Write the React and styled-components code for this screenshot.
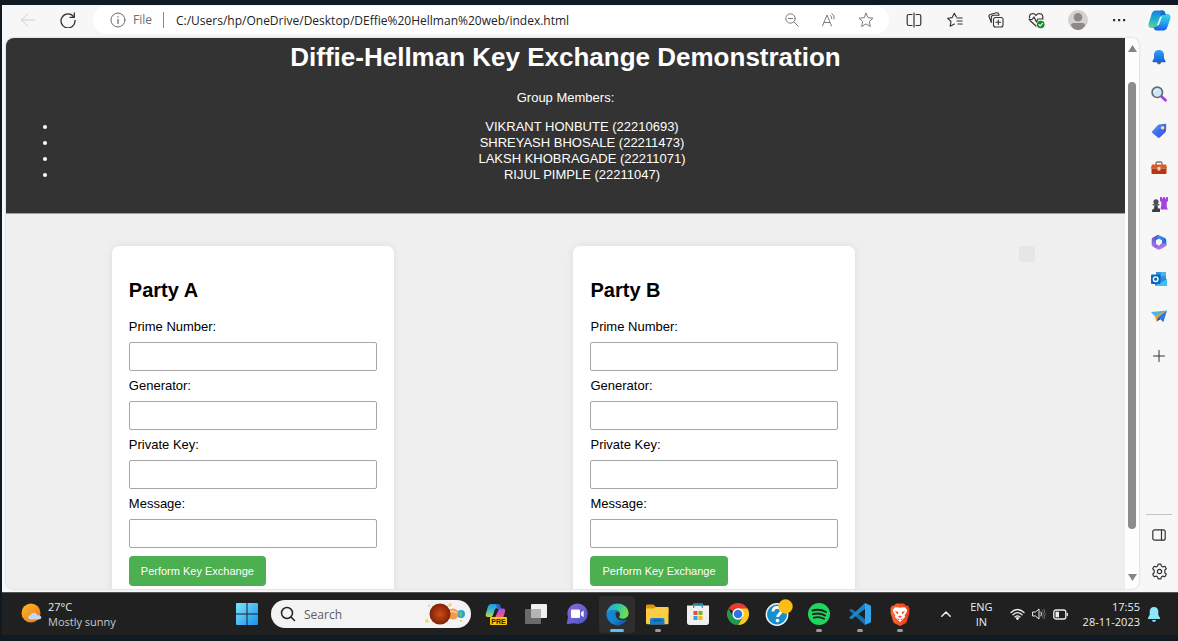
import React from "react";
import styled, { createGlobalStyle } from "styled-components";

const ui = `"Open Sans", "Noto Sans", sans-serif`;
const web = `"Liberation Sans", Arial, sans-serif`;

const GlobalStyle = createGlobalStyle`
  *, *::before, *::after { box-sizing: border-box; }
  body { margin: 0; background: #101a23; }
  button, input { font: inherit; margin: 0; }
  svg { flex: none; }
`;

const Desktop = styled.div`
  display: flex;
  flex-direction: column;
  height: 100vh;
  padding: 5px 0 6px 2px;
  background: #101a23;
  font-family: ${ui};
`;

const Window = styled.div`
  flex: 1;
  min-height: 0;
  display: flex;
  background: #f7f7f7;
`;

const WindowMain = styled.div`
  flex: 1;
  min-width: 0;
  display: flex;
  flex-direction: column;
`;

/* Browser toolbar */
const Toolbar = styled.div`
  display: flex;
  align-items: center;
  flex: none;
  height: 33px;
  padding: 0 0 3px 6px;
`;

const ToolButton = styled.button`
  flex: none;
  display: flex;
  align-items: center;
  justify-content: center;
  width: ${(p) => p.$w || 41}px;
  height: 28px;
  padding: 0;
  border: 0;
  background: none;
  color: ${(p) => p.$color || "#333"};
`;

const AddressBar = styled.div`
  flex: 1;
  min-width: 0;
  display: flex;
  align-items: center;
  height: 28px;
  margin: 0 4px 0 5px;
  padding: 0 5px 0 17px;
  border-radius: 14px;
  background: #fff;
  color: #6d6d6d;
  font-size: 12px;
`;

const Scheme = styled.span`
  margin-left: 7px;
  padding-right: 11px;
  line-height: 16px;
  border-right: 1px solid #8a8a8a;
`;

const UrlInput = styled.input`
  flex: 1;
  min-width: 0;
  height: 24px;
  padding: 0 0 0 12px;
  border: 0;
  outline: 0;
  background: none;
  color: #222;
`;

/* Page viewport */
const Viewport = styled.div`
  flex: 1;
  min-height: 0;
  display: flex;
  margin: 0 0 3px 4px;
  border-radius: 8px;
  overflow: hidden;
  box-shadow: 0 0 2px #b5b5b5;
  background: #fdfdfd;
`;

const Page = styled.div`
  flex: 1;
  min-width: 0;
  overflow: hidden;
  background: #efefef;
  color: #000;
  font-family: ${web};
  font-size: 13px;
  line-height: 16px;
`;

const PageHeader = styled.header`
  padding: 4px 13px 30px;
  border-bottom: 1px solid #a39d9f;
  background: #333;
  color: #fff;
  text-align: center;
`;

const Title = styled.h1`
  margin: 0 0 18px;
  font-size: 26px;
  line-height: 30px;
`;

const Intro = styled.p`
  margin: 0 0 13px;
`;

const Members = styled.ul`
  margin: 0;
  padding: 0 6px 0 39px;
`;

const Parties = styled.main`
  display: flex;
  justify-content: space-around;
  align-items: flex-start;
  padding: 16px;
`;

const Card = styled.form`
  width: 282px;
  margin: 16px;
  padding: 17px;
  border-radius: 7px;
  background: #fff;
  box-shadow: 0 0 8px rgba(0, 0, 0, 0.08);
`;

const CardTitle = styled.h2`
  margin: 16px 0 18px;
  font-size: 20px;
  line-height: 22px;
`;

const Label = styled.label`
  display: block;
  margin-bottom: 7px;
`;

const Field = styled.input`
  display: block;
  width: 100%;
  height: 29px;
  margin-bottom: 7px;
  padding: 6px;
  border: 1px solid #a6a6a6;
  border-radius: 2px;
  background: #fff;
`;

const ExchangeButton = styled.button`
  height: 30px;
  margin-top: 1px;
  padding: 0 12px;
  border: 0;
  border-radius: 4px;
  background: #4caf50;
  color: #fff;
  font-size: 11px;
`;

const Result = styled.div`
  width: 16px;
  height: 16px;
  margin: 16px 0;
  border-radius: 3px;
  background: #e6e6e6;
`;

const Scrollbar = styled.div`
  flex: none;
  display: flex;
  flex-direction: column;
  align-items: center;
  width: 14px;
  padding: 7px 0 8px;
  background: #fdfdfd;
`;

const Track = styled.div`
  flex: 1;
  display: flex;
  padding: 30px 0 45px;
`;

const Thumb = styled.div`
  width: 8px;
  border-radius: 4px;
  background: #8c8c8c;
`;

/* Edge sidebar */
const Sidebar = styled.aside`
  flex: none;
  display: flex;
  flex-direction: column;
  width: 39px;
  padding: 0 0 2px 1px;
`;

const SideButton = styled.button`
  display: flex;
  align-items: center;
  justify-content: center;
  height: 37px;
  padding: 0;
  border: 0;
  background: none;
  color: #333;
`;

const CopilotButton = styled(SideButton)`
  height: 30px;
  margin-bottom: 3px;
`;

const AddButton = styled(SideButton)`
  margin-top: 3px;
`;

const SideRule = styled.hr`
  width: 26px;
  margin: auto auto 1px;
  border: 0;
  border-top: 1px solid #c4c4c4;
`;

/* Taskbar */
const Taskbar = styled.footer`
  flex: none;
  display: flex;
  align-items: center;
  height: 43px;
  padding: 0 18px 0 0;
  border-top: 1px solid #555;
  background: #202020;
  color: #ededed;
  font-size: 11px;
  line-height: 15px;
`;

const Weather = styled.div`
  flex: none;
  display: flex;
  align-items: center;
  gap: 5px;
  width: 225px;
  padding-left: 19px;
`;

const Condition = styled.div`
  color: #c9c9c9;
`;

const TaskButton = styled.button`
  position: relative;
  flex: none;
  display: flex;
  align-items: center;
  justify-content: center;
  width: ${(p) => (p.$active ? 36 : 40)}px;
  height: 37px;
  margin: ${(p) => (p.$active ? "0 2px" : "0")};
  padding: 0;
  border: 0;
  border-radius: 4px;
  background: ${(p) => (p.$active ? "#2e2e2e" : "none")};

  &::after {
    content: "";
    display: ${(p) => (p.$active || p.$open ? "block" : "none")};
    position: absolute;
    bottom: 1px;
    width: ${(p) => (p.$active ? 14 : 6)}px;
    height: 3px;
    border-radius: 2px;
    background: ${(p) => (p.$active ? "#5ac0f5" : "#9b9b9b")};
  }
`;

const SearchBox = styled.label`
  flex: none;
  display: flex;
  align-items: center;
  gap: 8px;
  width: 200px;
  height: 28px;
  margin: 0 5px 0 4px;
  padding: 0 3px 0 9px;
  border-radius: 14px;
  background: #f3f3f3;
  color: #222;
  font-size: 12px;
`;

const SearchInput = styled.input`
  flex: 1;
  min-width: 0;
  padding: 0;
  border: 0;
  outline: 0;
  background: none;
  &::placeholder { color: #5d5d5d; opacity: 1; }
`;

const Apps = styled.div`
  display: flex;
  justify-content: space-between;
  width: 444px;
`;

const Tray = styled.div`
  display: flex;
  align-items: center;
  margin-left: auto;
`;

const Language = styled.div`
  margin: 0 17px 0 19px;
  text-align: center;
`;

const Status = styled.div`
  display: flex;
  align-items: center;
  gap: 7px;
  margin-right: 15px;
`;

const Clock = styled.div`
  margin-right: 8px;
  text-align: right;
`;

const Svg = ({ w = 16, h, box, children, sw = 1 }) => (
  <svg
    width={w}
    height={h || w}
    viewBox={box || `0 0 ${w} ${h || w}`}
    fill="none"
    stroke="currentColor"
    strokeWidth={sw}
    strokeLinecap="round"
    strokeLinejoin="round"
    aria-hidden="true"
  >
    {children}
  </svg>
);

const Fill = ({ w = 16, h, box, children }) => (
  <svg width={w} height={h || w} viewBox={box || `0 0 ${w} ${h || w}`} aria-hidden="true">
    {children}
  </svg>
);

const Grad = ({ id, stops, x2 = 1, y2 = 1 }) => (
  <linearGradient id={id} x1="0" y1="0" x2={x2} y2={y2}>
    {stops.map((c, i) => (
      <stop key={i} offset={i / (stops.length - 1)} stopColor={c} />
    ))}
  </linearGradient>
);

const star = "M8 1.2 L10 5.7 L15 6.2 L11.3 9.5 L12.4 14.5 L8 11.9 L3.6 14.5 L4.7 9.5 L1 6.2 L6 5.7 Z";

const Copilot = () => (
  <Fill w={23} h={21} box="0 0 23 21">
    <defs>
      <Grad id="cpA" stops={["#1b7be2", "#17b3cf", "#62d487"]} x2={0} />
      <Grad id="cpB" stops={["#3fd6d8", "#27a8f5", "#1459e8"]} x2={0} />
    </defs>
    <path d="M7.500.5h7c1.600 0 2.300 1 2.700 2.500l.6 2h-2.300c-1.800 0-2.700 1.200-3.300 3L10 15c-.7 2-1.700 3-3.700 3H3.500C.8 18 0 15.500.8 13L3.600 4C4.400 1.800 5.600.5 7.500.5z" fill="url(#cpA)" />
    <path d="M15.500 20.500h-7c-1.600 0-2.300-1-2.700-2.500l-.2-1h1c1.800 0 2.700-1.200 3.300-3L12.600 7c.6-2 1.600-3 3.600-3h3.300c2.700 0 3.500 2.500 2.700 5l-2.800 8c-.8 2.200-2 3.500-3.900 3.500z" fill="url(#cpB)" />
    <path d="M11.400 8.500c.4-1.200 1.200-2 2.600-2.200l-2.500 7.200c-.4 1.200-1.200 2-2.600 2.200z" fill="#eefaff" />
    <path d="M12.500.5h2c1.600 0 2.300 1 2.700 2.500l.6 2h-2.300c-1.300 0-2.200.6-2.800 1.700z" fill="#1a6bd2" />
  </Fill>
);

const SideBell = () => (
  <Fill w={16}>
    <defs><Grad id="sbell" stops={["#2fa3f3", "#1461d8"]} x2={0} /></defs>
    <path d="M6 13h4c0 1.500-.8 2.300-2 2.300S6 14.500 6 13z" fill="#5b5f66" />
    <path d="M8 1C4.800 1 3 3.300 3 6v3.300L1.500 12c-.3.800 0 1.200.8 1.200h11.400c.8 0 1.100-.4.800-1.200L13 9.300V6c0-2.700-1.800-5-5-5z" fill="url(#sbell)" />
  </Fill>
);

const SideSearch = () => (
  <Fill w={16}>
    <path d="M10.500 10.500l4 3.700" stroke="#a63ce8" strokeWidth="2.800" strokeLinecap="round" />
    <circle cx="6.300" cy="6.300" r="5.200" fill="#c9e8f8" stroke="#666c72" strokeWidth="1.700" />
    <path d="M3.500 6A2.600 2.600 0 016 3.500" stroke="#fff" fill="none" />
  </Fill>
);

const Tag = () => (
  <Fill w={16}>
    <defs><Grad id="tag" stops={["#5fa3ff", "#3b6df0", "#5a42dd"]} /></defs>
    <path d="M8 1.500l6-.7c.9-.1 1.300.3 1.300 1.200L15 8c-.1.500-.3.900-.7 1.300l-5.500 5.300c-.6.600-1.300.6-1.900 0L1.400 10c-.6-.6-.6-1.400 0-2L7 2c.3-.3.600-.4 1-.5z" fill="url(#tag)" />
    <circle cx="11.600" cy="4.700" r="1.800" fill="#ffe36a" />
  </Fill>
);

const Toolbox = () => (
  <Fill w={18} h={16}>
    <path d="M6 5V3.300C6 2.500 6.500 2 7.200 2h3.600c.7 0 1.200.5 1.200 1.300V5" fill="none" stroke="#777" strokeWidth="1.300" />
    <path d="M2 4.500h14l1.300 4H.7z" fill="#e0582a" />
    <path d="M1.500 8.500h15V13c0 .6-.4 1-1 1h-13c-.6 0-1-.4-1-1z" fill="#b9340f" />
    <rect x="7.500" y="7" width="3" height="3.500" rx=".5" fill="#d8dadd" />
  </Fill>
);

const Chess = () => (
  <Fill w={18}>
    <path d="M10 1h2v1.500h1.200V1h1.800v1.500h1.200V1H18v4l-1.300 1v5l1.300 2.500h-7.500L11.300 9V6L10 5z" fill="#a93fe3" />
    <circle cx="6" cy="5.800" r="2.600" fill="#4b4e52" />
    <path d="M4.700 8h2.600l.7 4.500h2V16H2v-2l2-1.500z" fill="#3c3f43" />
    <rect x="2.500" y="8" width="7" height="1.500" rx=".7" fill="#5b5e63" />
  </Fill>
);

const M365 = () => (
  <Fill w={16}>
    <defs>
      <Grad id="m1" stops={["#5548c8", "#a77be8"]} x2={0} />
      <Grad id="m2" stops={["#36a8ee", "#2456c8"]} />
      <Grad id="m3" stops={["#7353d5", "#d08af0"]} />
    </defs>
    <path d="M7 .7L2 3.500C1 4 .7 4.700.7 5.700v4.800c0 1 .4 1.700 1.300 2.200L5 10.500V6.200L10 3.500z" fill="url(#m1)" />
    <path d="M7 .7l6.500 3c1.200.6 1.800 1.300 1.800 2.600V12L11 9.500V6.300L6.500 4z" fill="url(#m2)" />
    <path d="M15.300 9.500v1c0 1-.4 1.700-1.300 2.200l-4.500 2.600c-1 .5-2 .5-3 0L2 12.700 5 10l3 1.700L11 9z" fill="url(#m3)" />
  </Fill>
);

const Outlook = () => (
  <Fill w={16}>
    <path d="M5 1h10v7H5z" fill="#2f94e0" />
    <path d="M10 1h5v4h-5z" fill="#43b5ef" />
    <path d="M4 7l12 1v6c0 .6-.4 1-1 1H5c-.6 0-1-.4-1-1z" fill="#1d8adb" />
    <path d="M4 14.500L16 8v6c0 .6-.4 1-1 1H5z" fill="#3fc0f5" />
    <rect x="0" y="3.500" width="9.500" height="9.500" rx="1" fill="#0e64b8" />
    <circle cx="4.700" cy="8.200" r="2.300" fill="none" stroke="#fff" strokeWidth="1.400" />
  </Fill>
);

const Plane = () => (
  <Fill w={16}>
    <path d="M0 4l16-1.500L8 8 4 8.500z" fill="#45b8e8" />
    <path d="M16 2.500L4 8l1.500 5.500L8.500 11z" fill="#e5a135" />
    <path d="M16 2.500L7.500 9l4 4.500c.5.500 1 .3 1.200-.3z" fill="#2f78d8" />
    <path d="M5.500 13.500l2-4.500 2 2.200z" fill="#1b4fa5" />
  </Fill>
);

const Gear = () => (
  <Svg w={17} box="0 0 16 16" sw={1.1}>
    <path d="M6.700 1h2.600l.5 1.900 1.400.8 1.900-.6 1.300 2.300-1.400 1.400v2.400l1.400 1.400-1.300 2.300-1.900-.6-1.400.8L9.300 15H6.700l-.5-1.900-1.400-.8-1.900.6-1.300-2.300L3 9.200V6.800L1.600 5.400l1.300-2.300 1.900.6 1.400-.8z" />
    <circle cx="8" cy="8" r="2" />
  </Svg>
);

const WeatherIcon = () => (
  <Fill w={22}>
    <defs><Grad id="sun" stops={["#f9bd25", "#ee6f1d"]} /></defs>
    <circle cx="10" cy="10" r="9.500" fill="url(#sun)" />
    <path d="M10 16.500c-2 0-3-1-3-2.200 0-1.400 1.200-2.200 2.500-2.100.5-1.800 2-2.700 3.800-2.500 1.600.2 2.700 1.300 3 2.600 2-.1 4 .5 4 2.200 0 1.300-1.200 2-2.800 2z" fill="#c2d7f7" />
  </Fill>
);

const StartIcon = () => (
  <Fill w={22}>
    <defs><Grad id="win" stops={["#7de3fb", "#1692ee"]} /></defs>
    <path d="M0 1q0-1 1-1h9.500v10.500H0zM11.500 0H21q1 0 1 1v9.500H11.500zM0 11.500h10.500V22H1q-1 0-1-1zM11.500 11.500H22V21q0 1-1 1h-9.500z" fill="url(#win)" />
  </Fill>
);

const Planets = () => (
  <Fill w={44} h={24}>
    <defs>
      <radialGradient id="mars"><stop offset="0" stopColor="#d04b16" /><stop offset="1" stopColor="#7f2207" /></radialGradient>
    </defs>
    <circle cx="37" cy="12" r="4" fill="#27a3d8" />
    <path d="M35 9q3 0 3 3t-2 3z" fill="#6cc46b" />
    <circle cx="29" cy="12" r="5.500" fill="#f29a54" />
    <path d="M25 10q4-2 8 1" stroke="#ffd19b" strokeWidth="1.500" fill="none" />
    <circle cx="16" cy="12" r="10.500" fill="url(#mars)" />
    <path d="M3 17v4M1 19h4M26 1v4M24 3h4M5 2.500v2M4 3.500h2M37 18v2M36 19h2" stroke="#edc94e" />
  </Fill>
);

const CopilotPre = () => (
  <Fill w={22}>
    <defs>
      <Grad id="pA" stops={["#2196e8", "#3dbbc5", "#cfd33e"]} x2={0} />
      <Grad id="pB" stops={["#9a56ee", "#e34fa4", "#f4794b"]} x2={0} />
    </defs>
    <path d="M6 1h6c1.500 0 2.200 1 2.600 2.500L15 5h-3c-1.500 0-2 1-2.500 2.500L8 12c-.5 1.500-1.300 2-2.500 2H3C.8 14 .3 12.500.9 10.500L3 3.500C3.500 2 4.500 1 6 1z" fill="url(#pA)" />
    <path d="M11 1h2c1.500 0 2.200 1 2.600 2.500L16 6h-4z" fill="#2766c9" />
    <path d="M13 8c.5-1.500 1.200-2.500 2.800-2.500H18c2 0 2.500 1.500 2 3.500l-2 6c-.5 1.500-1.500 2-3 2H9z" fill="url(#pB)" />
    <rect x="5" y="14" width="17" height="8" rx="1" fill="#fbc711" />
    <text x="13.500" y="20.700" fontSize="7" fontWeight="700" fontFamily="Liberation Sans, sans-serif" textAnchor="middle" fill="#2b2200">PRE</text>
  </Fill>
);

const TaskView = () => (
  <Fill w={22}>
    <rect x="6" y="1" width="16" height="14" rx="1" fill="#f0f0f0" />
    <rect x="0" y="6" width="16" height="15" rx="1" fill="#6b6b6b" />
    <path d="M6 6h10v9H6z" fill="#b4b4b4" />
  </Fill>
);

const Chat = () => (
  <Fill w={22}>
    <defs><Grad id="chat" stops={["#8a6ad8", "#4c56c6"]} /></defs>
    <path d="M2 14L.8 20.500c-.1.600.2.900.8.800L9 20z" fill="#6a5fcb" />
    <circle cx="11.500" cy="10.800" r="10.200" fill="url(#chat)" />
    <rect x="5" y="6.500" width="9" height="8.500" rx="1.300" fill="#fff" />
    <path d="M15 9.500l2.700-2v6.700l-2.700-2z" fill="#fff" />
  </Fill>
);

const EdgeLogo = () => (
  <Fill w={23} box="0 0 24 24">
    <defs>
      <Grad id="eg1" stops={["#219fe0", "#2dc4b1", "#6ddd4f"]} y2={0.3} />
      <Grad id="eg2" stops={["#1a9de2", "#0a4f9e"]} />
    </defs>
    <path d="M.5 12A11.600 11.600 0 0112 .4C18.500.4 23.600 5 23.600 10.500c0 3.700-2.700 6-6 6-2.600 0-4-1-4-1.800 0-.6 1-.9 1-2.700 0-2.600-2.300-4.600-5.500-4.600C5 7.400 1.500 9 .5 12z" fill="url(#eg1)" />
    <path d="M.4 12.500C.7 9 4.500 7.400 8.700 7.400c2.500 0 4.200.8 5.100 2.300C10 8.800 8 11.300 8 14c0 4.500 3.700 8 8 8.400A11.700 11.700 0 01.4 12.500z" fill="#1685d3" />
    <path d="M8 14c0-1.800.8-3.300 2.100-4.300C8.500 15.500 14 20 21.700 17.300 20 20.500 16 23.500 12 23.500 7 22 7 17 8 14z" fill="url(#eg2)" />
  </Fill>
);

const Folder = () => (
  <Fill w={23} h={22}>
    <path d="M0 3c0-1 .5-1.500 1.500-1.500h6L10 4H21c1 0 1.500.5 1.500 1.500V11H0z" fill="#dc9310" />
    <path d="M0 5.500h8L10 4h11.500c.8 0 1 .4 1 1V20c0 .8-.3 1.200-1 1.200h-20C.4 21.200 0 20.800 0 20z" fill="#fccd42" />
    <path d="M4 21.500V17c0-1.300.8-2 2-2h10.500c1.200 0 2 .7 2 2v4.500z" fill="#167cd0" />
    <path d="M7.500 17.500h7.500" stroke="#0a579e" strokeWidth="1.500" />
  </Fill>
);

const Store = () => (
  <Fill w={22}>
    <path d="M6.500 5V1.700Q6.500 1 7.200 1h7.600q.7 0 .7.700V5" fill="none" stroke="#2a9bc5" strokeWidth="1.500" />
    <path d="M0 2.500h6v2.500h1.200V2.500h7.600V5H16V2.500h6v17c0 1.500-1 2.500-2.500 2.500h-17C1 22 0 21 0 19.500z" fill="#f0f0f0" />
    <path d="M6.500 8h4v4h-4z" fill="#e8502f" />
    <path d="M11.500 8h4v4h-4z" fill="#78b723" />
    <path d="M6.500 13h4v4h-4z" fill="#29a4e9" />
    <path d="M11.500 13h4v4h-4z" fill="#fbb813" />
  </Fill>
);

const Chrome = () => (
  <Fill w={22} box="0 0 24 24">
    <path d="M12 12L1.600 6A12 12 0 0122.400 6z" fill="#e33b2e" />
    <path d="M12 6h10.400A12 12 0 0112 24l5.200-9z" fill="#fdc921" />
    <path d="M17.200 15L12 24A12 12 0 011.600 6l5.200 9z" fill="#219b4b" />
    <circle cx="12" cy="12" r="6.200" fill="#fff" />
    <circle cx="12" cy="12" r="4.700" fill="#2e75e8" />
  </Fill>
);

const Help = () => (
  <Fill w={28} h={30}>
    <circle cx="12" cy="15.500" r="10.700" fill="#178fcb" stroke="#e8f5fb" strokeWidth="1.400" />
    <path d="M8 12.500c0-2.800 1.700-4.200 4.200-4.200 2.400 0 4 1.400 4 3.600 0 3.100-3.600 3.200-3.600 6" fill="none" stroke="#fff" strokeWidth="2.800" />
    <circle cx="12.500" cy="21.500" r="1.800" fill="#fff" />
    <circle cx="20.500" cy="7.500" r="7.200" fill="#fcbd16" />
  </Fill>
);

const Spotify = () => (
  <Fill w={22}>
    <circle cx="11" cy="11" r="11" fill="#1ed760" />
    <path d="M4.500 7.500Q11.500 5.300 18 9M5 11.200Q11.500 9.400 17 12.500M5.800 14.700Q11.500 13.200 16 15.800" fill="none" stroke="#17231b" strokeWidth="1.900" strokeLinecap="round" />
  </Fill>
);

const VsCode = () => (
  <Fill w={22}>
    <path d="M2.600 5.700L0 7.200 16 22V16z" fill="#1470b0" />
    <path d="M2.600 16.300L0 14.800 16 0v6z" fill="#1c86cc" />
    <path d="M16 0l5 2.300c.7.300 1 .7 1 1.500v14.400c0 .8-.3 1.200-1 1.500L16 22z" fill="#31a5ee" />
  </Fill>
);

const Brave = () => (
  <Fill w={20} h={23}>
    <defs><Grad id="brave" stops={["#fa6a31", "#ef3a20"]} y2={0} /></defs>
    <path d="M6 .5h8l2 2.200 2-.2L19.700 6l-.6 2 .5 1.500-2.800 9c-.3.800-.7 1.300-1.300 1.700L10 23l-5.500-2.800c-.6-.4-1-.9-1.300-1.700l-2.800-9L.9 8 .3 6 2 2.500l2 .2z" fill="url(#brave)" />
    <path d="M10 4.700l2.500-.5 3 .3 1.700 3-1 2.500-1.500 2 .3 2L10 19l-5-5 .3-2-1.500-2-1-2.500 1.700-3 3-.3z" fill="#fff" />
    <path d="M4.800 8l3.700 1-1 2.500zM15.200 8l-3.700 1 1 2.500zM8 13.500l2-1 2 1-2 1.500zM7 14.500l3 2.500 3-2.500-1.500 2.500H8.500z" fill="#f1512a" />
  </Fill>
);

const parties = ["A", "B"];
const fields = ["Prime Number:", "Generator:", "Private Key:", "Message:"];
const members = [
  "VIKRANT HONBUTE (22210693)",
  "SHREYASH BHOSALE (22211473)",
  "LAKSH KHOBRAGADE (22211071)",
  "RIJUL PIMPLE (22211047)",
];

const sideApps = [
  ["Notifications", SideBell],
  ["Search", SideSearch],
  ["Shopping", Tag],
  ["Tools", Toolbox],
  ["Games", Chess],
  ["Microsoft 365", M365],
  ["Outlook", Outlook],
  ["Drop", Plane],
];

const taskApps = [
  ["Copilot", CopilotPre],
  ["Task view", TaskView],
  ["Chat", Chat],
  ["Microsoft Edge", EdgeLogo, "active"],
  ["File Explorer", Folder, "open"],
  ["Microsoft Store", Store],
  ["Google Chrome", Chrome],
  ["Get Help", Help],
  ["Spotify", Spotify, "open"],
  ["Visual Studio Code", VsCode, "open"],
  ["Brave", Brave, "open"],
];

const PartyCard = ({ name }) => (
  <Card onSubmit={(e) => e.preventDefault()}>
    <CardTitle>Party {name}</CardTitle>
    {fields.map((label, i) => (
      <React.Fragment key={label}>
        <Label htmlFor={`party${name}-${i}`}>{label}</Label>
        <Field id={`party${name}-${i}`} type="text" />
      </React.Fragment>
    ))}
    <ExchangeButton type="submit">Perform Key Exchange</ExchangeButton>
  </Card>
);

const BrowserToolbar = () => (
  <Toolbar>
    <ToolButton $w={40} $color="#cfcfcf" aria-label="Back">
      <Svg w={16}><path d="M15 8H1.500M7.500 2L1.500 8l6 6" /></Svg>
    </ToolButton>
    <ToolButton $w={40} aria-label="Refresh">
      <Svg w={16} sw={1.3}><path d="M13.800 5A7 7 0 1015 8.500M14.300 1v4.300H10" /></Svg>
    </ToolButton>
    <AddressBar>
      <Svg w={16}><circle cx="8" cy="8" r="7" /><path d="M8 7.500v4M8 4.700v.2" strokeWidth={1.3} /></Svg>
      <Scheme>File</Scheme>
      <UrlInput
        aria-label="Address"
        defaultValue="C:/Users/hp/OneDrive/Desktop/DEffie%20Hellman%20web/index.html"
      />
      <ToolButton $w={37} $color="#7c7c7c" aria-label="Zoom out">
        <Svg w={14}><circle cx="5.500" cy="5.500" r="4.700" /><path d="M9 9l4.200 4.200M3.300 5.500h4.400" /></Svg>
      </ToolButton>
      <ToolButton $w={37} $color="#7c7c7c" aria-label="Read aloud">
        <Svg w={16}><path d="M1.500 14L6 3l4.500 11M3 10.500h6M9.500 3.500q1.500 1 1.300 3M11 1.500q3 2 2.200 5.500" /></Svg>
      </ToolButton>
      <ToolButton $w={37} $color="#7c7c7c" aria-label="Add to favourites">
        <Svg w={16}><path d={star} /></Svg>
      </ToolButton>
    </AddressBar>
    <ToolButton aria-label="Split screen">
      <Svg w={16} sw={1.2}><path d="M6 2.500H3Q1.200 2.500 1.200 4.300v7.400Q1.200 13.500 3 13.500h3M10 2.500h3q1.800 0 1.800 1.800v7.400q0 1.800-1.800 1.800h-3M8 1v14" /></Svg>
    </ToolButton>
    <ToolButton aria-label="Favourites">
      <Svg w={16} sw={1.1}><path d="M9.300 5L7.300 1.200 5.200 5.600.7 6.300 4 9.500l-.8 4.700 4.100-2.300M10 6h5.200M10 9h5.200M11 12h4.200" /></Svg>
    </ToolButton>
    <ToolButton aria-label="Collections">
      <Svg w={16} sw={1.1}><rect x="5.500" y="5.500" width="9.500" height="9.500" rx="2" /><path d="M10.300 8v4.600M8 10.300h4.600M3.300 10.500L1 4.500Q.7 3 2.200 2.500L8.500.8Q10 .6 10.500 1.800l.5 1.200M3.300 10.500V5.500Q3.300 3.300 5.500 3.300h5.500" /></Svg>
    </ToolButton>
    <ToolButton aria-label="Browser essentials">
      <Svg w={17} box="0 0 17 17" sw={1.2}>
        <path d="M8 14L2 8.500M1.500 6Q1 2 4.500 1.500 7 1.500 8 3.500 9 1.500 11.500 1.500 15.500 2 14.700 6.500M1 7.500h3L6 5l2.500 5L10 7h5" />
        <circle cx="12.700" cy="12.500" r="3.800" fill="#138a22" stroke="none" />
        <path d="M11 12.600l1.200 1.200 2.200-2.400" stroke="#fff" />
      </Svg>
    </ToolButton>
    <ToolButton aria-label="Profile">
      <Fill w={20}>
        <circle cx="10" cy="10" r="10" fill="#d5d1ce" />
        <circle cx="10" cy="7.200" r="4.300" fill="#8d8986" />
        <path d="M3 15.500Q3 13 5.500 13h9q2.500 0 2.500 2.500Q14.500 20 10 20t-7-4.500z" fill="#8d8986" />
      </Fill>
    </ToolButton>
    <ToolButton aria-label="Settings and more">
      <Fill w={14} h={4}><path d="M1 1h2.200v2.200H1zM6 1h2.200v2.200H6zM11 1h2.200v2.200H11z" fill="#333" /></Fill>
    </ToolButton>
  </Toolbar>
);

const EdgeSidebar = () => (
  <Sidebar>
    <CopilotButton aria-label="Copilot"><Copilot /></CopilotButton>
    {sideApps.map(([label, Icon]) => (
      <SideButton key={label} aria-label={label}><Icon /></SideButton>
    ))}
    <AddButton aria-label="Customise">
      <Svg w={12}><path d="M6 .5v11M.5 6h11" /></Svg>
    </AddButton>
    <SideRule />
    <SideButton aria-label="Hide sidebar">
      <Svg w={14} h={12} sw={1.2}><rect x=".8" y=".8" width="12.400" height="10.400" rx="2" /><path d="M9.500 1v10" /></Svg>
    </SideButton>
    <SideButton aria-label="Settings"><Gear /></SideButton>
  </Sidebar>
);

export default function App() {
  return (
    <Desktop>
      <GlobalStyle />
      <Window>
        <WindowMain>
          <BrowserToolbar />
          <Viewport>
            <Page>
              <PageHeader>
                <Title>Diffie-Hellman Key Exchange Demonstration</Title>
                <Intro>Group Members:</Intro>
                <Members>
                  {members.map((m) => <li key={m}>{m}</li>)}
                </Members>
              </PageHeader>
              <Parties>
                {parties.map((p) => <PartyCard key={p} name={p} />)}
                <Result />
              </Parties>
            </Page>
            <Scrollbar>
              <Fill w={9} h={7}><path d="M4.500 0L9 7H0z" fill="#858585" /></Fill>
              <Track><Thumb /></Track>
              <Fill w={9} h={7}><path d="M4.500 7L9 0H0z" fill="#858585" /></Fill>
            </Scrollbar>
          </Viewport>
        </WindowMain>
        <EdgeSidebar />
      </Window>
      <Taskbar>
        <Weather>
          <WeatherIcon />
          <div>
            <div>27°C</div>
            <Condition>Mostly sunny</Condition>
          </div>
        </Weather>
        <TaskButton aria-label="Start"><StartIcon /></TaskButton>
        <SearchBox>
          <Svg w={16} sw={1.5}><circle cx="7" cy="7" r="5.500" /><path d="M11 11l3.500 3.500" /></Svg>
          <SearchInput type="text" placeholder="Search" aria-label="Search" />
          <Planets />
        </SearchBox>
        <Apps>
          {taskApps.map(([label, Icon, state]) => (
            <TaskButton
              key={label}
              aria-label={label}
              $active={state === "active"}
              $open={state === "open"}
            >
              <Icon />
            </TaskButton>
          ))}
        </Apps>
        <Tray>
          <Svg w={10} h={6} sw={1.5}><path d="M.8 5.200L5 1l4.200 4.200" /></Svg>
          <Language>ENG<br />IN</Language>
          <Status>
            <Svg w={15} h={12} sw={1.3}>
              <path d="M1 4.500Q7.500-1.500 14 4.500M3 6.800Q7.500 2.500 12 6.800M5 9Q7.500 6.700 10 9" />
              <circle cx="7.500" cy="10.500" r=".8" fill="currentColor" />
            </Svg>
            <Svg w={14} h={12}>
              <path d="M1 4h2.500L7 1v10L3.500 8H1zM9 4q1 2 0 4" />
              <path d="M10.500 2.500q2 3.500 0 7M12 1q2.500 5 0 10" stroke="#666" />
            </Svg>
            <Svg w={15} h={11} sw={1.3}>
              <rect x=".8" y="1" width="12" height="9" rx="2" />
              <rect x="2.500" y="2.700" width="3.500" height="5.600" fill="currentColor" stroke="none" />
              <path d="M14.300 4.500v2" />
            </Svg>
          </Status>
          <Clock>17:55<br />28-11-2023</Clock>
          <Fill w={12} h={15}>
            <path d="M6 0C3.300 0 1.700 2 1.700 4.500v3.300L0 11c-.2.600 0 1 .7 1h10.600c.7 0 .9-.4.7-1l-1.700-3.200V4.500C10.300 2 8.700 0 6 0zM4 13h4q-.3 2-2 2t-2-2z" fill="#8be6fb" />
          </Fill>
        </Tray>
      </Taskbar>
    </Desktop>
  );
}
